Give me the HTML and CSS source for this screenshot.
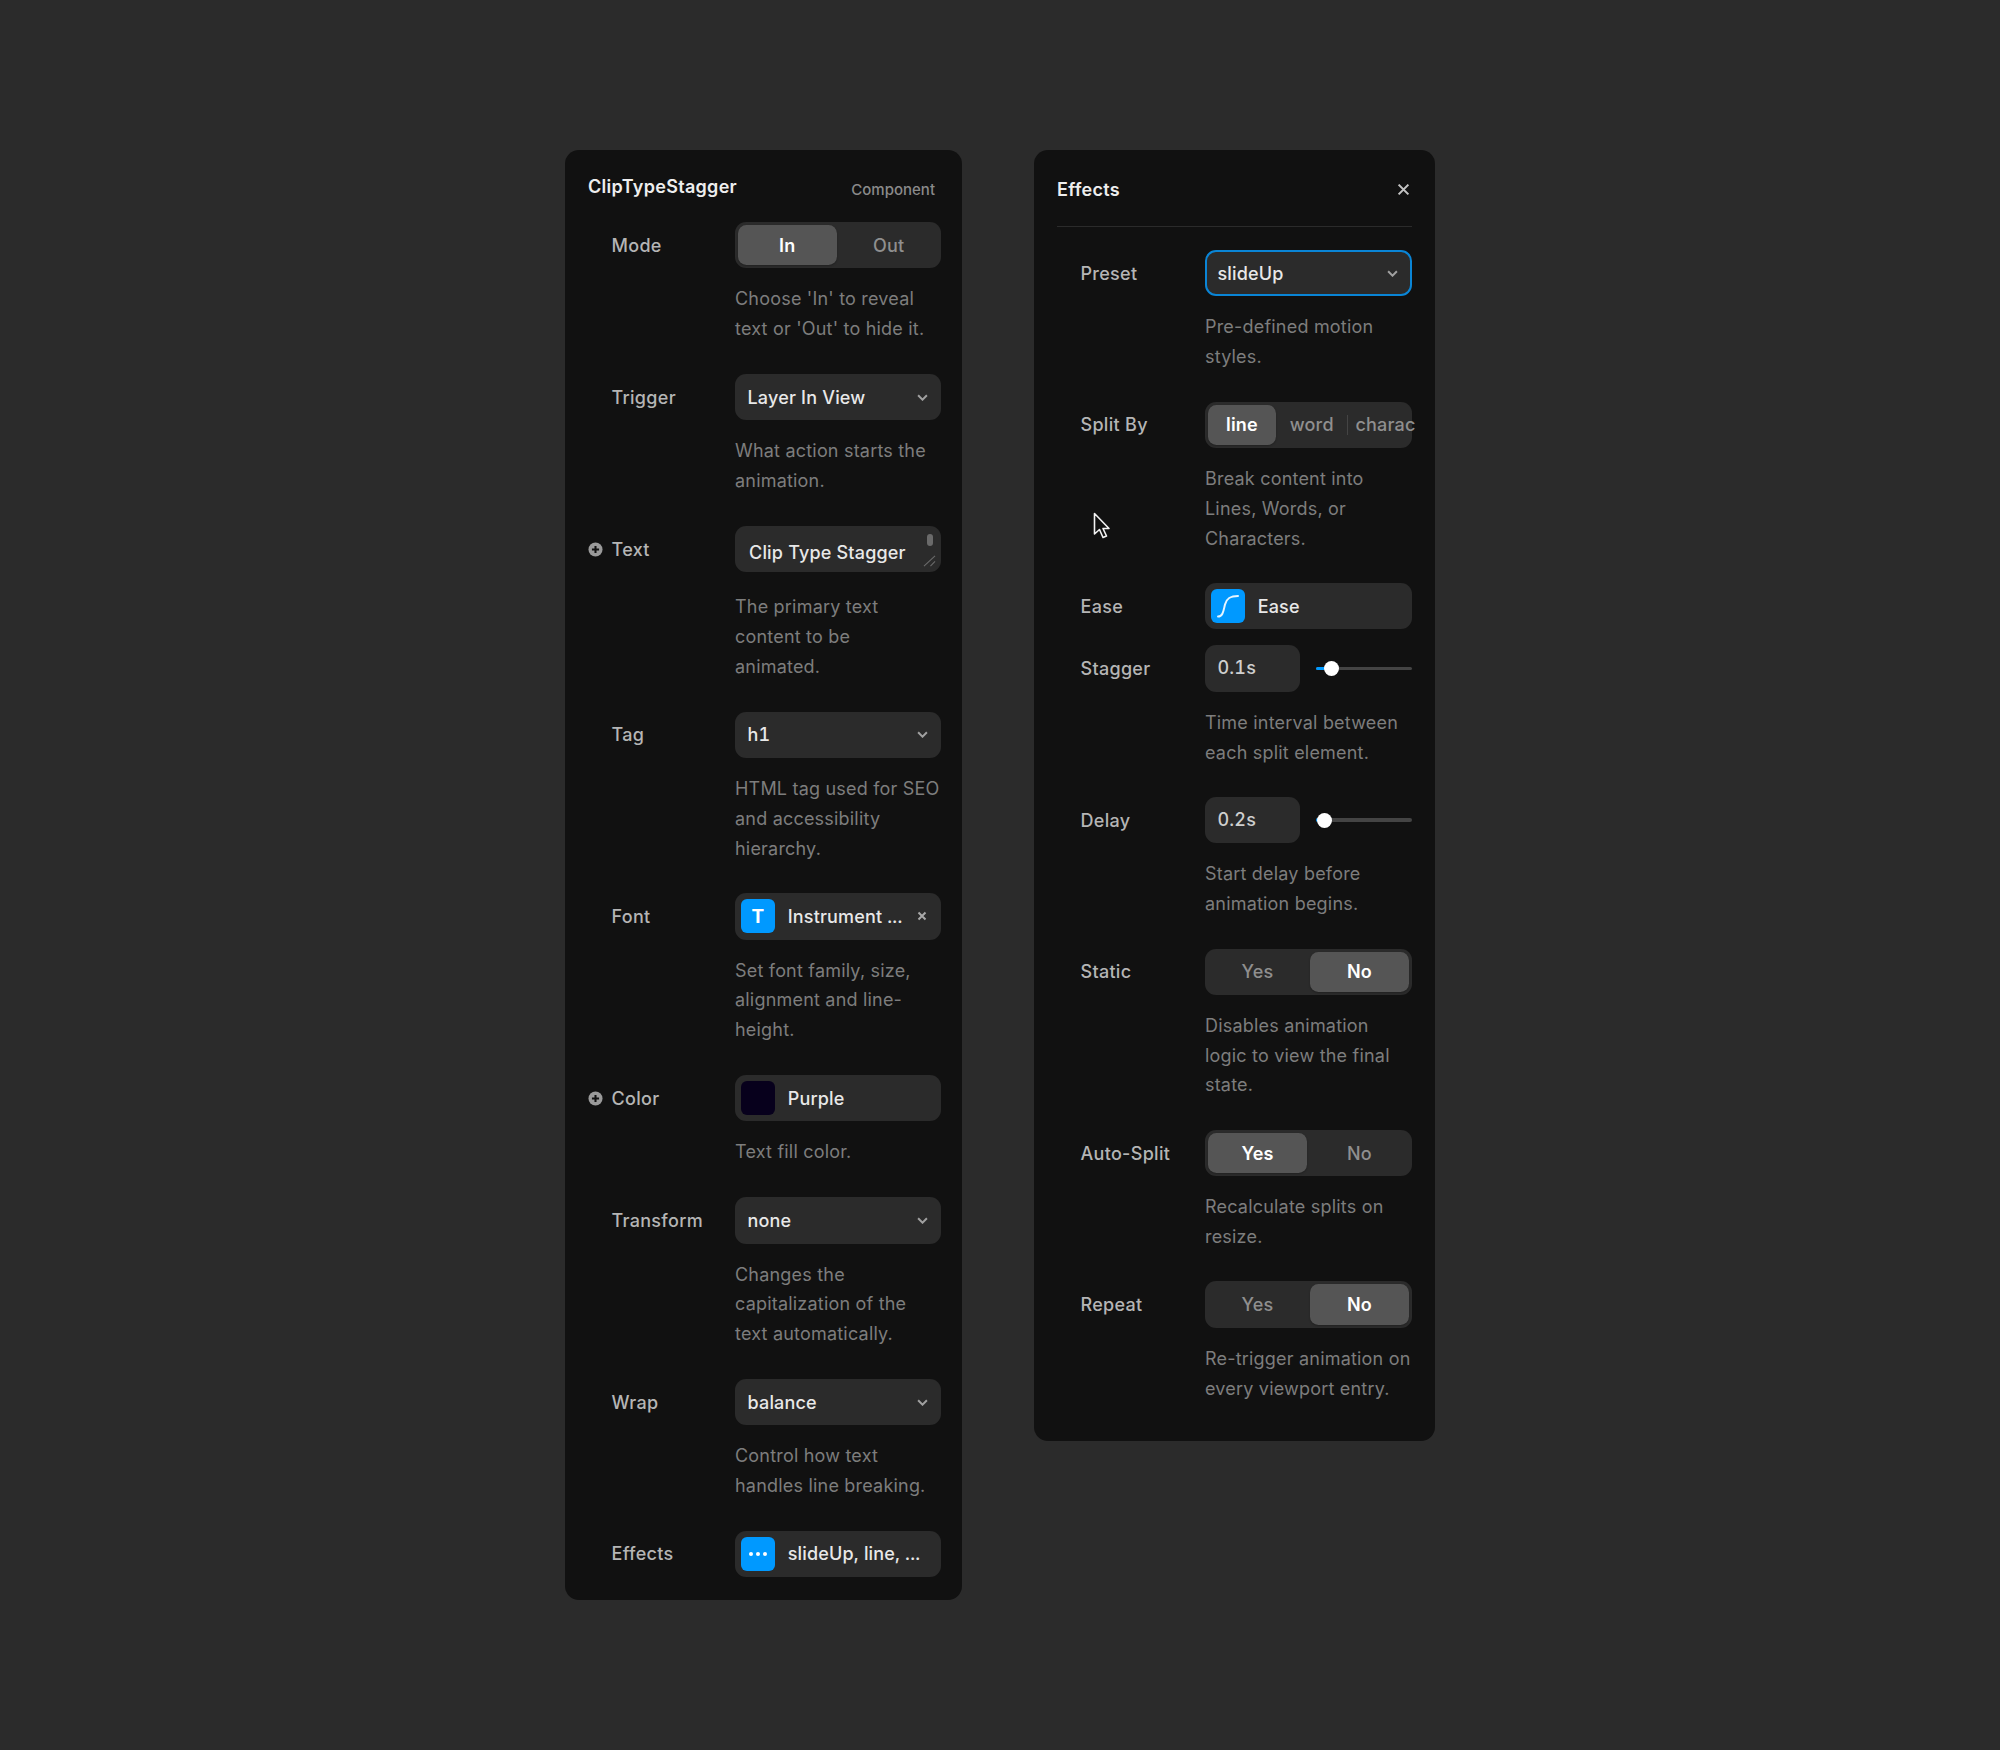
FILE: index.html
```html
<!DOCTYPE html>
<html lang="en">
<head>
    <meta charset="UTF-8">
    <title>ClipTypeStagger Properties</title>
    <link rel="stylesheet" href="styles.css">
</head>
<body>
    <div class="stage">

        <!-- Component panel -->
        <div class="panel panel-main">
            <div class="panel-head">
                <span class="panel-title">ClipTypeStagger</span>
                <span class="panel-kind">Component</span>
            </div>

            <div class="row">
                <span class="label">Mode</span>
                <div class="ctrl seg">
                    <span class="seg-item on">In</span>
                    <span class="seg-item">Out</span>
                </div>
                <p class="desc">Choose 'In' to reveal<br>text or 'Out' to hide it.</p>
            </div>

            <div class="row">
                <span class="label">Trigger</span>
                <div class="ctrl select">
                    <span>Layer In View</span>
                    <svg class="chev" viewBox="0 0 10 6"><path d="M1 1l4 4 4-4"/></svg>
                </div>
                <p class="desc">What action starts the<br>animation.</p>
            </div>

            <div class="row row-text">
                <span class="label">
                    <svg class="plus" viewBox="0 0 16 16"><circle cx="8" cy="8" r="7.5"/><path d="M8 4.2v7.6M4.2 8h7.6"/></svg>
                    Text
                </span>
                <div class="ctrl textbox">
                    <span>Clip Type Stagger</span>
                    <i class="scroll-thumb"></i>
                    <svg class="grip" viewBox="0 0 14 13"><path d="M1 12L13 1M8 12l5-5"/></svg>
                </div>
                <p class="desc">The primary text<br>content to be<br>animated.</p>
            </div>

            <div class="row">
                <span class="label">Tag</span>
                <div class="ctrl select">
                    <span>h1</span>
                    <svg class="chev" viewBox="0 0 10 6"><path d="M1 1l4 4 4-4"/></svg>
                </div>
                <p class="desc">HTML tag used for SEO<br>and accessibility<br>hierarchy.</p>
            </div>

            <div class="row">
                <span class="label">Font</span>
                <div class="ctrl picker">
                    <span class="tile tile-font">T</span>
                    <span class="picker-text">Instrument ...</span>
                    <svg class="clear" viewBox="0 0 10 10"><path d="M1.5 1.5l7 7M8.5 1.5l-7 7"/></svg>
                </div>
                <p class="desc">Set font family, size,<br>alignment and line-<br>height.</p>
            </div>

            <div class="row">
                <span class="label">
                    <svg class="plus" viewBox="0 0 16 16"><circle cx="8" cy="8" r="7.5"/><path d="M8 4.2v7.6M4.2 8h7.6"/></svg>
                    Color
                </span>
                <div class="ctrl picker">
                    <span class="tile tile-swatch"></span>
                    <span class="picker-text">Purple</span>
                </div>
                <p class="desc">Text fill color.</p>
            </div>

            <div class="row">
                <span class="label">Transform</span>
                <div class="ctrl select">
                    <span>none</span>
                    <svg class="chev" viewBox="0 0 10 6"><path d="M1 1l4 4 4-4"/></svg>
                </div>
                <p class="desc">Changes the<br>capitalization of the<br>text automatically.</p>
            </div>

            <div class="row">
                <span class="label">Wrap</span>
                <div class="ctrl select">
                    <span>balance</span>
                    <svg class="chev" viewBox="0 0 10 6"><path d="M1 1l4 4 4-4"/></svg>
                </div>
                <p class="desc">Control how text<br>handles line breaking.</p>
            </div>

            <div class="row row-last">
                <span class="label">Effects</span>
                <div class="ctrl picker">
                    <span class="tile">
                        <svg class="dots" viewBox="0 0 18 4"><circle cx="2" cy="2" r="2"/><circle cx="9" cy="2" r="2"/><circle cx="16" cy="2" r="2"/></svg>
                    </span>
                    <span class="picker-text">slideUp, line, ...</span>
                </div>
            </div>
        </div>

        <!-- Effects popover -->
        <div class="panel panel-effects">
            <div class="panel-head head-line">
                <span class="panel-title">Effects</span>
                <svg class="close" viewBox="0 0 12 12"><path d="M1.5 1.5l9 9M10.5 1.5l-9 9"/></svg>
            </div>

            <div class="row">
                <span class="label">Preset</span>
                <div class="ctrl select focus">
                    <span>slideUp</span>
                    <svg class="chev" viewBox="0 0 10 6"><path d="M1 1l4 4 4-4"/></svg>
                </div>
                <p class="desc">Pre-defined motion<br>styles.</p>
            </div>

            <div class="row">
                <span class="label">Split By</span>
                <div class="ctrl seg seg-split">
                    <span class="seg-item on">line</span>
                    <span class="seg-item">word</span>
                    <span class="seg-item seg-clip">characters</span>
                </div>
                <p class="desc">Break content into<br>Lines, Words, or<br>Characters.</p>
            </div>

            <div class="row row-tight">
                <span class="label">Ease</span>
                <div class="ctrl picker">
                    <span class="tile">
                        <svg class="curve" viewBox="0 0 34 34"><path d="M7 27.5c5 0 5.500-6 7-12 1.500-6 5-8.500 13-8.500"/></svg>
                    </span>
                    <span class="picker-text">Ease</span>
                </div>
            </div>

            <div class="row">
                <span class="label">Stagger</span>
                <div class="ctrl-pair">
                    <div class="ctrl number">0.1s</div>
                    <div class="slider">
                        <i class="slider-fill" style="width: 16%"></i>
                        <i class="slider-thumb" style="left: 16%"></i>
                    </div>
                </div>
                <p class="desc">Time interval between<br>each split element.</p>
            </div>

            <div class="row">
                <span class="label">Delay</span>
                <div class="ctrl-pair">
                    <div class="ctrl number">0.2s</div>
                    <div class="slider">
                        <i class="slider-fill" style="width: 9%"></i>
                        <i class="slider-thumb" style="left: 9%"></i>
                    </div>
                </div>
                <p class="desc">Start delay before<br>animation begins.</p>
            </div>

            <div class="row">
                <span class="label">Static</span>
                <div class="ctrl seg">
                    <span class="seg-item">Yes</span>
                    <span class="seg-item on">No</span>
                </div>
                <p class="desc">Disables animation<br>logic to view the final<br>state.</p>
            </div>

            <div class="row">
                <span class="label">Auto-Split</span>
                <div class="ctrl seg">
                    <span class="seg-item on">Yes</span>
                    <span class="seg-item">No</span>
                </div>
                <p class="desc">Recalculate splits on<br>resize.</p>
            </div>

            <div class="row row-last">
                <span class="label">Repeat</span>
                <div class="ctrl seg">
                    <span class="seg-item">Yes</span>
                    <span class="seg-item on">No</span>
                </div>
                <p class="desc">Re-trigger animation on<br>every viewport entry.</p>
            </div>

            <!-- Mouse pointer caught in the screenshot -->
            <svg class="pointer" viewBox="0 0 17 27"><path d="M1.500 1.500v20.500l5-4.500 3.500 8 3.500-1.500-3.500-7.500h6z"/></svg>
        </div>

    </div>
</body>
</html>
```

FILE: styles.css
```css
/* General Styling */
body {
    font-family: "Inter", "Liberation Sans", sans-serif;
    background-color: #2b2b2b;
    margin: 0;
    padding: 0;
}

.stage {
    display: flex;
    justify-content: center;
    align-items: flex-start;
    gap: 72.400px;
    padding-top: 150px;
    min-height: 1600px;
}

/* Panels */
.panel {
    position: relative;
    box-sizing: border-box;
    background-color: #111111;
    border-radius: 14px;
}

.panel-main {
    width: 396.600px;
    padding: 23px 20.600px 23px 23px;
}

.panel-effects {
    width: 401px;
    padding: 23px 23px 38px 23px;
}

.panel-head {
    display: flex;
    justify-content: space-between;
    align-items: center;
    height: 27px;
    margin-bottom: 22px;
}

.panel-title {
    font-size: 18px;
    font-weight: 600;
    letter-spacing: 0.3px;
    color: #eeeeee;
}

.panel-kind {
    font-size: 15px;
    font-weight: 500;
    color: #8a8a8a;
    padding: 5px 6px 0 0;
}

.head-line {
    height: 32px;
    padding-bottom: 21px;
    border-bottom: 1px solid #2b2b2b;
    margin-bottom: 23px;
}

.close {
    width: 13px;
    height: 13px;
    margin-right: 1.500px;
    fill: none;
    stroke: #c4c4c4;
    stroke-width: 1.900;
}

/* Property rows */
.row {
    display: grid;
    grid-template-columns: 147px minmax(0, 1fr);
    row-gap: 16px;
    align-items: center;
    margin-bottom: 29.950px;
}

.panel-effects .row {
    grid-template-columns: 148px minmax(0, 1fr);
    margin-bottom: 29.600px;
}

.row-tight,
.panel-effects .row-tight {
    margin-bottom: 16px;
}

.row-last,
.panel-effects .row-last {
    margin-bottom: 0;
}

.label {
    position: relative;
    padding-left: 23.500px;
    font-size: 18px;
    font-weight: 500;
    letter-spacing: 0.3px;
    color: #b5b5b5;
}

.plus {
    position: absolute;
    left: 0;
    top: 50%;
    width: 15px;
    height: 15px;
    margin-top: -7.500px;
}

.plus circle {
    fill: #9a9a9a;
}

.plus path {
    fill: none;
    stroke: #111111;
    stroke-width: 2.200;
}

.desc {
    grid-column: 2;
    margin: 0;
    font-size: 18px;
    line-height: 29.800px;
    letter-spacing: 0.2px;
    color: #7d7d7d;
}

.row-text .desc {
    margin-top: 4px;
}

/* Controls */
.ctrl {
    position: relative;
    box-sizing: border-box;
    height: 46.400px;
    min-width: 0;
    background-color: #2b2b2b;
    border-radius: 11px;
    font-size: 18px;
    font-weight: 500;
    letter-spacing: 0.18px;
    font-variant-numeric: tabular-nums;
    color: #e8e8e8;
}

.select {
    display: flex;
    justify-content: space-between;
    align-items: center;
    padding: 0 13px 0 12.500px;
}

.select.focus {
    border: 2px solid #0a85d6;
    padding: 0 11.500px 0 10.500px;
}

.chev {
    width: 11px;
    height: 7px;
    fill: none;
    stroke: #a0a0a0;
    stroke-width: 1.800;
}

.textbox {
    display: flex;
    align-items: center;
    padding: 6px 0 0 14px;
}

.scroll-thumb {
    position: absolute;
    right: 8px;
    top: 8px;
    width: 6px;
    height: 12px;
    border-radius: 3px;
    background-color: #6a6a6a;
}

.grip {
    position: absolute;
    right: 5px;
    bottom: 5px;
    width: 13px;
    height: 12px;
    fill: none;
    stroke: #6a6a6a;
    stroke-width: 1.200;
}

.picker {
    display: flex;
    align-items: center;
    padding-left: 6px;
}

.picker-text {
    margin-left: 12.700px;
    flex: 1;
}

.clear {
    width: 10px;
    height: 10px;
    margin-right: 14px;
    fill: none;
    stroke: #a8a8a8;
    stroke-width: 2;
}

.tile {
    display: flex;
    justify-content: center;
    align-items: center;
    width: 34px;
    height: 34px;
    flex-shrink: 0;
    border-radius: 6px;
    background-color: #0099ff;
}

.tile-font {
    font-size: 19px;
    font-weight: 700;
    color: #ffffff;
}

.tile-swatch {
    background-color: #07001c;
}

.dots {
    width: 18px;
    height: 4px;
    fill: #ffffff;
}

.curve {
    width: 34px;
    height: 34px;
    fill: none;
    stroke: #e6f5ff;
    stroke-width: 2;
    stroke-linecap: round;
}

/* Segmented toggle */
.seg {
    display: flex;
    gap: 3px;
    padding: 3px;
}

.seg-item {
    flex: 1;
    display: flex;
    justify-content: center;
    align-items: center;
    border-radius: 8.500px;
    color: #8f8f8f;
}

.seg-item.on {
    background-color: #555555;
    color: #ffffff;
    font-weight: 600;
    box-shadow: 0 1px 2px rgba(0, 0, 0, 0.25);
}

.seg-split {
    gap: 0;
}

.seg-split .seg-item {
    flex: none;
}

.seg-split .seg-item.on {
    width: 68px;
}

.seg-split .seg-item:nth-child(2) {
    width: 71.500px;
}

.seg-split .seg-clip {
    display: block;
    width: 67.500px;
    padding-left: 8px;
    box-sizing: border-box;
    line-height: 40.400px;
    white-space: nowrap;
    overflow: hidden;
    border-radius: 0;
}

.seg-split::after {
    content: "";
    position: absolute;
    left: 142.500px;
    top: 13px;
    width: 1px;
    height: 20px;
    background-color: #444444;
}

/* Number + slider */
.ctrl-pair {
    display: flex;
    align-items: center;
    gap: 15.500px;
}

.number {
    width: 95.500px;
    flex-shrink: 0;
    padding-left: 12.500px;
    line-height: 46.400px;
    color: #cfcfcf;
}

.slider {
    position: relative;
    flex: 1;
    height: 3.500px;
    border-radius: 2px;
    background-color: #444444;
}

.slider-fill {
    position: absolute;
    left: 0;
    top: 0;
    height: 100%;
    border-radius: 2px;
    background-color: #0099ff;
}

.slider-thumb {
    position: absolute;
    top: 50%;
    width: 15px;
    height: 15px;
    margin: -7.500px 0 0 -7.500px;
    border-radius: 50%;
    background-color: #ffffff;
}

/* Mouse pointer */
.pointer {
    position: absolute;
    left: 59px;
    top: 362px;
    width: 17px;
    height: 27px;
    fill: #111111;
    stroke: #f2f2f2;
    stroke-width: 1.600;
    stroke-linejoin: round;
}
```
